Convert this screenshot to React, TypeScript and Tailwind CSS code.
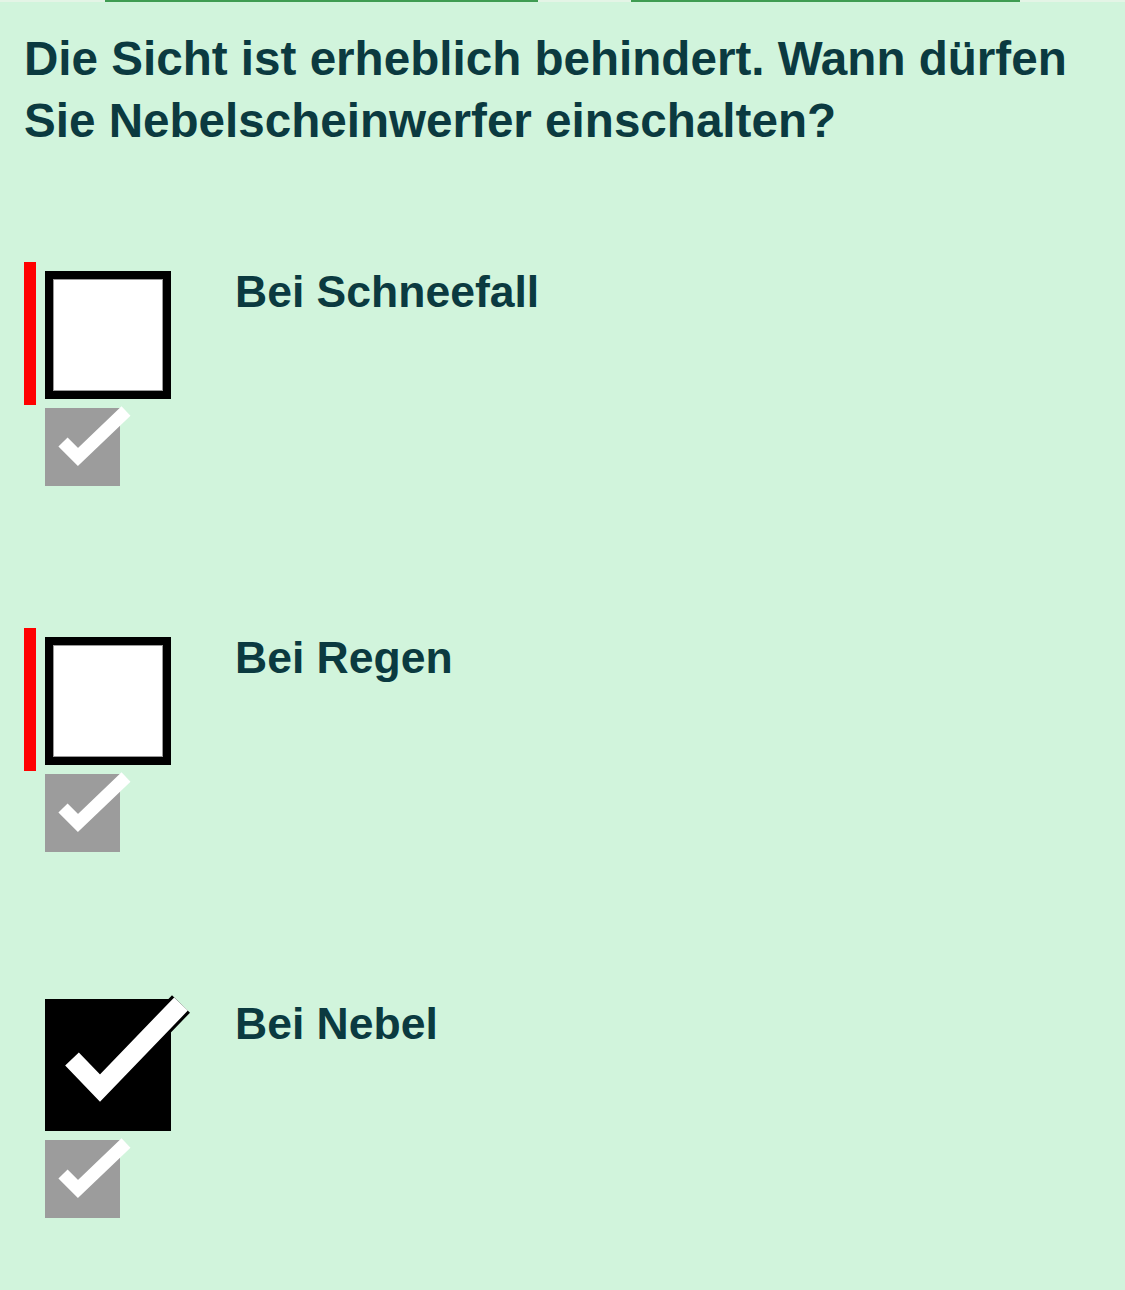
import React from 'react';

const answers = [
  { label: 'Bei Schneefall', checked: false, marked: true },
  { label: 'Bei Regen', checked: false, marked: true },
  { label: 'Bei Nebel', checked: true, marked: false },
];

const GrayCheck = ({ gap }: { gap: string }) => (
  <div className={`relative ${gap} ml-[21px] h-[78px] w-[75px] bg-[#9c9c9c]`}>
    <svg className="absolute left-0 top-0 overflow-visible" width="90" height="78" viewBox="0 0 90 78">
      <polyline points="18,34 33,49 81,3" fill="none" stroke="#ffffff" strokeWidth="13" strokeLinejoin="miter" />
    </svg>
  </div>
);

const AnswerRow = ({ label, checked, marked }: { label: string; checked: boolean; marked: boolean }) => (
  <div className="flex min-h-[366px] items-start last:min-h-0">
    <div className="w-[211px] shrink-0">
      {checked ? (
        <div className="ml-[21px] pt-[5px]">
          <div className="relative h-[132px] w-[126px] bg-black">
            <svg className="absolute left-0 top-0 overflow-visible" width="160" height="132" viewBox="0 0 160 132">
              <polyline points="27,60 55,89 136,5" fill="none" stroke="#000000" strokeWidth="25" strokeLinejoin="miter" />
              <polyline points="27,60 55,89 136,5" fill="none" stroke="#ffffff" strokeWidth="19" strokeLinejoin="miter" />
            </svg>
          </div>
        </div>
      ) : (
        <div className={`w-[147px] border-l-[12px] pl-[9px] pt-[9px] pb-[6px] ${marked ? 'border-[#ff0000]' : 'border-transparent'}`}>
          <div className="h-[128px] w-[126px] border-[8px] border-black bg-white shadow-[inset_0_0_0_1px_#9a9a9a]" />
        </div>
      )}
      <GrayCheck gap={checked ? 'mt-[9px]' : 'mt-[3px]'} />
    </div>
    <p className="pt-[3px] text-[44.5px] font-bold leading-[1.2] text-[#0b3a40]">{label}</p>
  </div>
);

export default function App() {
  return (
    <div
      className="min-h-screen w-full bg-[#d1f4dc]"
      style={{ fontFamily: '"Liberation Sans", Arial, sans-serif' }}
    >
      <div className="flex h-[2px] bg-[#e4f4e6]">
        <div className="w-[105px]" />
        <div className="w-[433px] bg-[#3f9c52]" />
        <div className="w-[93px]" />
        <div className="w-[389px] bg-[#3f9c52]" />
      </div>
      <div className="px-6 pt-[26px] pb-[40px]">
        <h1 className="text-[47.6px] font-bold leading-[62px] text-[#0b3a40]">
          Die Sicht ist erheblich behindert. Wann dürfen Sie Nebelscheinwerfer einschalten?
        </h1>
        <div className="mt-[110px]">
          {answers.map((a) => (
            <AnswerRow key={a.label} {...a} />
          ))}
        </div>
      </div>
    </div>
  );
}
